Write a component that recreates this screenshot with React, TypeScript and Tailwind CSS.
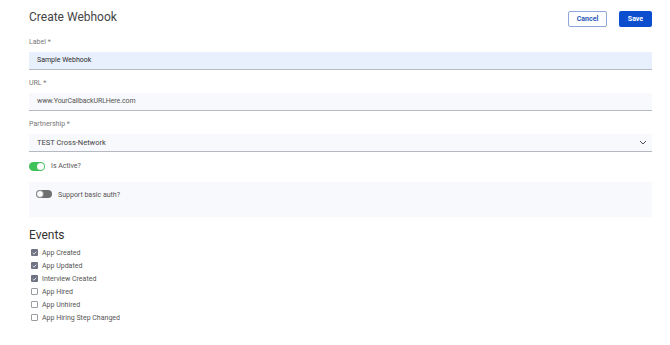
import React from 'react';

const events = [
    { name: 'App Created', checked: true },
    { name: 'App Updated', checked: true },
    { name: 'Interview Created', checked: true },
    { name: 'App Hired', checked: false },
    { name: 'App Unhired', checked: false },
    { name: 'App Hiring Step Changed', checked: false },
];

export default function App() {
    return (
        <div className="w-[670px] h-[345px] bg-white pl-[29px] pr-[18px] font-['Roboto',sans-serif] text-[#333]">
            <Header />
            <Field label="Label *" value="Sample Webhook" className="bg-[#e8f0fe] text-[#2a2a2a] text-[7px]" />
            <Field
                label="URL *"
                value="www.YourCallbackURLHere.com"
                className="bg-[#f8f9fc] text-[#555] text-[7px] tracking-[-0.1px]"
            />
            <PartnershipSelect />

            <div className="mt-[9px] flex h-[10px] items-center gap-[6px]">
                <Toggle on />
                <span className="text-[7px] leading-[10px] text-[#555]">Is Active?</span>
            </div>

            <div className="mt-[11px] flex h-[35px] items-start gap-[6px] bg-[#f8f9fc] pl-[7px] pt-[8px]">
                <Toggle on={false} />
                <span className="text-[7px] leading-[10px] text-[#555]">Support basic auth?</span>
            </div>

            <EventsSection />
        </div>
    );
}

function Header() {
    return (
        <div className="flex h-[37px] items-start justify-between pt-[8px]">
            <h1 className="text-[12px] leading-[18px] text-[#444]">Create Webhook</h1>
            <div className="mt-[3px] flex gap-[12px]">
                <button className="h-[16px] w-[39px] rounded-[2px] border border-[#8fa8d8] text-[7px] font-bold text-[#2a56b8]">
                    Cancel
                </button>
                <button className="h-[16px] w-[33px] rounded-[2px] bg-[#0b4fcf] text-[7px] font-bold text-white">
                    Save
                </button>
            </div>
        </div>
    );
}

function Field({ label, value, className }: { label: string; value: string; className: string }) {
    return (
        <div className="mb-[8px]">
            <div className="text-[7px] leading-[10px] text-[#777]">{label}</div>
            <div className={`mt-[5px] flex h-[18px] items-center border-b border-[#b5b9c2] pl-[8px] ${className}`}>
                {value}
            </div>
        </div>
    );
}

function PartnershipSelect() {
    return (
        <div>
            <div className="text-[7px] leading-[10px] text-[#777]">Partnership *</div>
            <div className="mt-[5px] flex h-[18px] items-center justify-between border-b border-[#b5b9c2] bg-[#f8f9fc] pl-[8px] pr-[5px] text-[7.5px] text-[#444]">
                <span>TEST Cross-Network</span>
                <svg width="8" height="5" viewBox="0 0 8 5" fill="none">
                    <path d="M1 1l3 3 3-3" stroke="#4a4f66" strokeWidth="1" />
                </svg>
            </div>
        </div>
    );
}

function Toggle({ on }: { on: boolean }) {
    return on ? (
        <span className="relative inline-block h-[9px] w-[16px] rounded-full bg-[#3fc25a]">
            <span className="absolute right-[1px] top-[1px] h-[7px] w-[7px] rounded-full bg-white" />
        </span>
    ) : (
        <span className="relative inline-block h-[8px] w-[16px] rounded-full bg-[#6f6f6f]">
            <span className="absolute left-0 top-0 h-[8px] w-[8px] rounded-full border border-[#8a8a8a] bg-white" />
        </span>
    );
}

function EventsSection() {
    return (
        <section>
            <h2 className="mt-[11px] text-[12px] leading-[14px] text-[#333]">Events</h2>
            <ul className="mt-[4px]">
                {events.map(({ name, checked }) => (
                    <li key={name} className="flex h-[13px] items-center gap-[4px] pl-[2px]">
                        {checked ? (
                            <span className="flex h-[7px] w-[7px] items-center justify-center rounded-[1px] bg-[#6f7384]">
                                <svg width="5" height="4" viewBox="0 0 5 4" fill="none">
                                    <path d="M0.7 2l1.2 1.2L4.3 0.8" stroke="white" strokeWidth="0.8" />
                                </svg>
                            </span>
                        ) : (
                            <span className="h-[7px] w-[7px] rounded-[1px] border border-[#9a9ca4] bg-white" />
                        )}
                        <span className="text-[7px] leading-[10px] text-[#555]">{name}</span>
                    </li>
                ))}
            </ul>
        </section>
    );
}
